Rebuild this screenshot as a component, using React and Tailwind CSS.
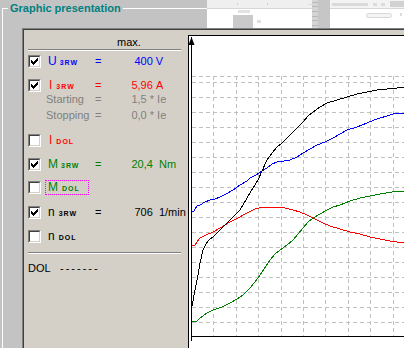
import React from 'react';

const font = { fontFamily: '"Liberation Sans", Arial, sans-serif' };

const curves = {
  black: '192,306 195,290 198,275 200,263 203,250 206,244 209,240 213,237 223,227 230,220 240,210 247,198 253,188 258,180 262,171 267,160 272,153 277,147 282,143 287,138 295,130 303,122 308,116 313,112 320,107 327,103 337,100 347,97 357,94 367,92 377,90 387,89 397,88 404,87',
  blue: '191,212 194,211 197,206 200,205 205,202 210,200 215,199 220,197 226,194 233,190 240,185 247,181 250,178 256,175 262,171 267,168 272,164 277,162 284,161 290,160 297,157 303,153 310,149 317,145 325,142 333,138 340,134 347,130 357,127 367,123 374,120 380,118 387,116 393,114 404,113',
  red: '191,246 195,245 197,242 200,238 206,235 213,232 220,228 230,222 238,218 247,213 255,209 263,207 277,207 285,208 293,210 300,212 307,215 315,219 323,223 330,226 340,229 350,232 360,234 370,237 380,239 390,241 397,242 404,242',
  green: '191,322 197,321 200,318 207,313 213,310 222,307 230,303 237,299 243,295 250,288 258,278 264,269 270,260 275,254 280,250 287,245 293,240 298,234 303,228 308,222 313,218 320,214 327,210 333,207 340,205 350,201 360,198 370,196 380,194 392,192 404,191',
};

const hLines = [76, 82, 97, 112, 127, 142, 157, 172, 187, 202, 217, 232, 247, 262, 277, 292, 307, 322];
const vLines = [213, 236, 258, 281, 303, 325, 348, 370, 393];

const Checkbox = ({ checked }) => (
  <div className="w-[13px] h-[13px] shrink-0 border-t border-l border-[#808080] border-b border-r border-b-white border-r-white">
    <div className="w-full h-full border-t border-l border-[#404040] border-b border-r border-b-[#d4d0c8] border-r-[#d4d0c8] bg-white">
      {checked && (
        <svg width="9" height="9" viewBox="0 0 9 9" shapeRendering="crispEdges">
          <path d="M1 3h1v3h-1zM2 4h1v3h-1zM3 5h1v3h-1zM4 4h1v3h-1zM5 3h1v3h-1zM6 2h1v3h-1zM7 1h1v3h-1z" fill="#000" />
        </svg>
      )}
    </div>
  </div>
);

const Label = ({ main, sub, color, subGap = 'ml-[3px]' }) => (
  <span className={`flex items-baseline ${color}`}>
    <span className="text-[12px] leading-[14px]">{main}</span>
    <span className={`text-[7px] font-bold tracking-[1px] ${subGap}`}>{sub}</span>
  </span>
);

const Separator = ({ className }) => (
  <div className={`ml-[4px] w-[153px] h-[2px] border-t border-[#808080] border-b border-b-white ${className}`} />
);

export default function App() {
  return (
    <div className="w-[404px] h-[348px] bg-[#c3c3c3] flex flex-col overflow-hidden text-black" style={font}>
      {/* Group box title */}
      <div className="h-[28px] flex shrink-0">
        <div className="w-[207px] flex items-start">
          <div className="ml-[2px] mt-[8px] w-[6px] h-[20px] border-l border-t border-white" />
          <span className="mt-[2px] px-[2px] text-[11px] leading-[13px] font-bold text-[#008080] whitespace-nowrap">Graphic presentation</span>
          <div className="flex-1 mt-[8px] h-px bg-white" />
        </div>
        {/* faded window behind */}
        <div className="flex-1 flex">
          <div className="w-[105px] flex flex-col">
            <div className="h-[8px] bg-[#efefef] flex items-center">
              <div className="ml-[30px] w-[2px] h-[2px] bg-[#d0d0d0]" />
              <div className="ml-[30px] w-[2px] h-[2px] bg-[#d0d0d0]" />
              <div className="ml-[40px] w-[18px] h-px bg-[#dedede]" />
            </div>
            <div className="h-px bg-[#d6d6d6]" />
            <div className="flex-1 bg-white flex flex-col">
              <div className="ml-[31px] mt-[1px] w-[12px] h-[3px] bg-[#e2e2e2]" />
              <div className="flex items-end flex-1">
                <div className="ml-[26px] w-[20px] h-[13px] bg-[#cacaca]" />
                <div className="ml-[4px] mb-[5px] w-[4px] h-[3px] bg-[#e0e0e0]" />
              </div>
            </div>
          </div>
          <div className="w-[6px] bg-[#d4d4d4] flex flex-col justify-around">
            <div className="h-px bg-[#b8b8b8]" />
            <div className="h-px bg-[#b8b8b8]" />
            <div className="h-px bg-[#b8b8b8]" />
            <div className="h-px bg-[#b8b8b8]" />
            <div className="h-px bg-[#b8b8b8]" />
            <div className="h-px bg-[#b8b8b8]" />
          </div>
          <div className="w-[12px] bg-[#c6c6c6]" />
          <div className="flex-1 flex flex-col">
            <div className="h-[8px] bg-[#f3f3f3] flex items-center">
              <div className="ml-[2px] w-[36px] h-[3px] bg-[#dadada]" />
              <div className="ml-[5px] w-[4px] h-[3px] bg-[#dcdcdc]" />
              <div className="ml-[4px] w-[4px] h-[3px] bg-[#dcdcdc]" />
              <div className="ml-auto w-[14px] h-[6px] bg-[#d2d2d2]" />
            </div>
            <div className="h-px bg-[#d6d6d6]" />
            <div className="flex-1 bg-white flex items-start">
              <div className="ml-[36px] mt-[4px] w-[26px] h-[5px] rounded-full border border-[#d8d8d8] bg-[#f4f4f4]" />
              <div className="ml-auto mt-[4px] mr-[2px] w-[2px] h-[3px] bg-[#dcdcdc]" />
            </div>
          </div>
        </div>
      </div>

      {/* Body */}
      <div className="flex-1 flex min-h-0">
        <div className="w-[22px] pl-[2px] shrink-0">
          <div className="h-full border-l border-white" />
        </div>
        <div className="flex-1 border-l border-t border-[#808080] min-w-0">
          <div className="h-full border-l border-t border-[#404040] bg-[#d4d0c8] flex">
            {/* Left list */}
            <div className="w-[164px] shrink-0 flex flex-col text-[11px]">
              <div className="mt-[6px] h-[13px] leading-[13px] pl-[93px]">max.</div>
              <Separator />

              <div className="mt-[3px] h-[14px] flex items-center pl-[4px]">
                <Checkbox checked />
                <span className="ml-[7px] w-[47px]"><Label main="U" sub="3RW" color="text-[#0000ff]" /></span>
                <span className="text-[#0000ff]">=</span>
                <span className="ml-[33px] text-[#0000ff] whitespace-nowrap">400&nbsp;V</span>
              </div>

              <div className="mt-[10px] h-[14px] flex items-center pl-[4px]">
                <Checkbox checked />
                <span className="ml-[8px] w-[46px]"><Label main="I" sub="3RW" color="text-[#ff0000]" subGap="ml-[4px]" /></span>
                <span className="text-[#ff0000]">=</span>
                <span className="ml-[30px] text-[#ff0000] whitespace-nowrap">5,96&nbsp;A</span>
              </div>

              <div className="h-[14px] flex items-center pl-[22px] text-[#808080]">
                <span className="w-[49px]">Starting</span>
                <span>=</span>
                <span className="ml-[30px] whitespace-nowrap">1,5 * Ie</span>
              </div>
              <div className="mt-[2px] h-[14px] flex items-center pl-[22px] text-[#808080]">
                <span className="w-[49px]">Stopping</span>
                <span>=</span>
                <span className="ml-[30px] whitespace-nowrap">0,0 * Ie</span>
              </div>

              <div className="mt-[11px] h-[14px] flex items-center pl-[4px]">
                <Checkbox />
                <span className="ml-[8px]"><Label main="I" sub="DOL" color="text-[#ff0000]" subGap="ml-[4px]" /></span>
              </div>

              <div className="mt-[10px] h-[14px] flex items-center pl-[4px]">
                <Checkbox checked />
                <span className="ml-[7px] w-[47px]"><Label main="M" sub="3RW" color="text-[#008000]" /></span>
                <span className="text-[#008000]">=</span>
                <span className="ml-[30px] text-[#008000] whitespace-nowrap">20,4&nbsp;&nbsp;Nm</span>
              </div>

              <div className="mt-[9px] h-[14px] flex items-center pl-[4px]">
                <Checkbox />
                <span className="ml-[4px] h-[15px] px-[2px] flex items-center border border-dotted border-[#ff00ff]">
                  <Label main="M" sub="DOL" color="text-[#008000]" subGap="ml-[4px]" />
                  <span className="w-[6px]" />
                </span>
              </div>

              <div className="mt-[11px] h-[14px] flex items-center pl-[4px]">
                <Checkbox checked />
                <span className="ml-[7px] w-[47px]"><Label main="n" sub="3RW" color="text-black" subGap="ml-[4px]" /></span>
                <span>=</span>
                <span className="ml-[33px] whitespace-nowrap">706&nbsp;&nbsp;1/min</span>
              </div>

              <div className="mt-[10px] h-[14px] flex items-center pl-[4px]">
                <Checkbox />
                <span className="ml-[7px]"><Label main="n" sub="DOL" color="text-black" subGap="ml-[4px]" /></span>
              </div>

              <Separator className="mt-[9px]" />

              <div className="mt-[7px] h-[14px] flex items-center pl-[4px]">
                <span className="w-[32px]">DOL</span>
                <span className="tracking-[2px]">-------</span>
              </div>
            </div>

            {/* Chart */}
            <div className="flex-1 pt-[5px] min-w-0">
              <div className="h-full border-l border-t border-black bg-white overflow-hidden">
                <svg width="215" height="312" viewBox="189 36 215 312" className="block">
                  <g stroke="#c0c0c0" strokeWidth="1" strokeDasharray="4 3" shapeRendering="crispEdges">
                    {hLines.map((y) => (
                      <line key={`h${y}`} x1="192" y1={y + 0.5} x2="404" y2={y + 0.5} />
                    ))}
                    {vLines.map((x) => (
                      <line key={`v${x}`} x1={x + 0.5} y1="76" x2={x + 0.5} y2="336" />
                    ))}
                  </g>
                  <g fill="none" strokeWidth="1" shapeRendering="crispEdges">
                    <polyline points={curves.green} stroke="#008000" />
                    <polyline points={curves.red} stroke="#ff0000" />
                    <polyline points={curves.blue} stroke="#0000ff" />
                    <polyline points={curves.black} stroke="#000000" />
                  </g>
                  <g stroke="#000" strokeWidth="1" shapeRendering="crispEdges">
                    <line x1="191.5" y1="37" x2="191.5" y2="341" />
                    <line x1="191" y1="336.5" x2="404" y2="336.5" />
                  </g>
                  <polygon points="191.5,37 194.5,45 188.5,45" fill="#000" />
                </svg>
              </div>
            </div>
          </div>
        </div>
      </div>
    </div>
  );
}
